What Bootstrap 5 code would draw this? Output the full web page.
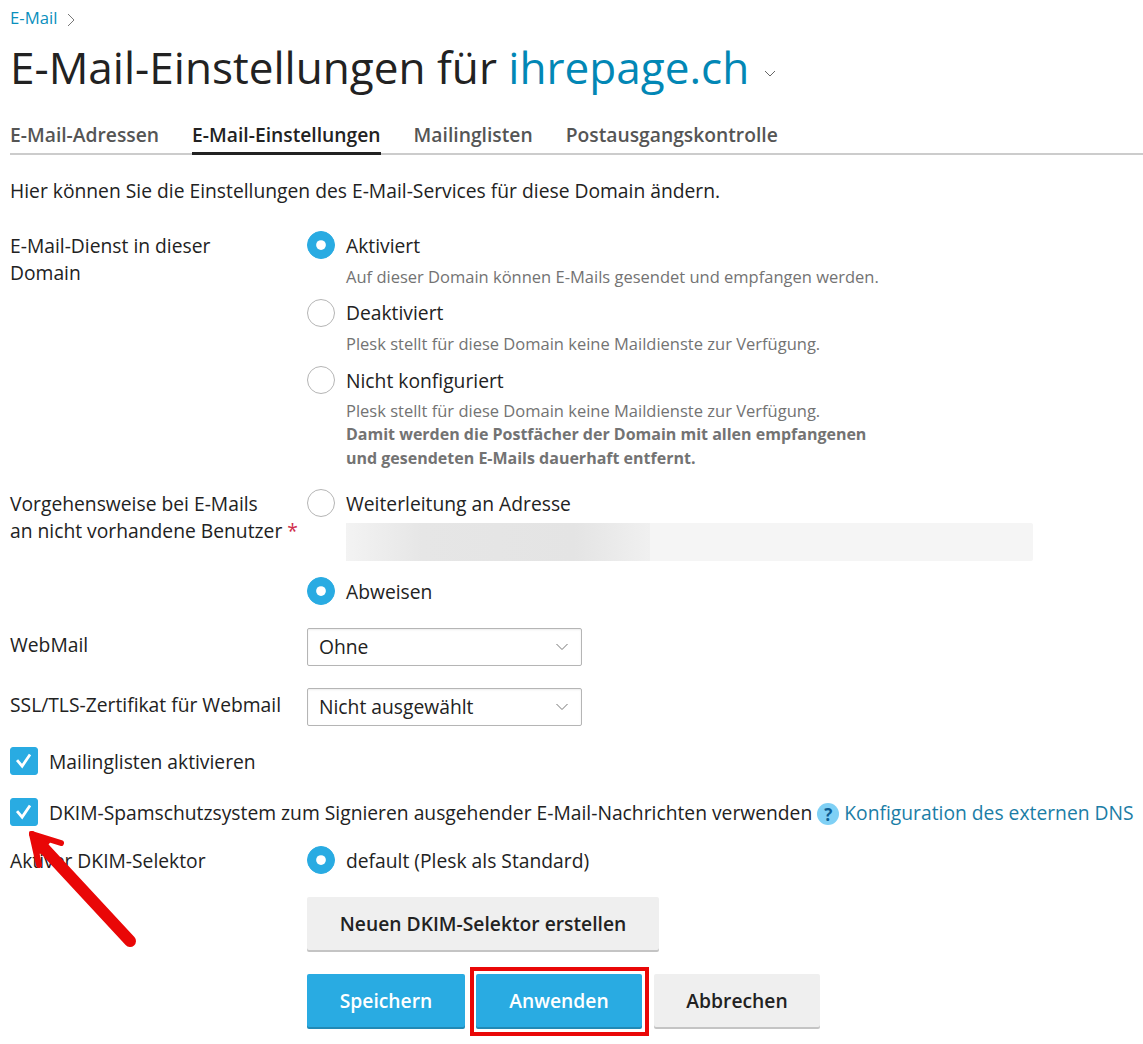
<!DOCTYPE html>
<html lang="de">
<head>
    <meta charset="UTF-8">
    <meta name="viewport" content="width=device-width, initial-scale=1.0">
    <title>E-Mail-Einstellungen</title>
    <link rel="stylesheet" href="https://cdn.jsdelivr.net/npm/bootstrap@5.3.0/dist/css/bootstrap.min.css">
    <style>
        html, body {
            height: 1044px;
            overflow: hidden;
        }
        body {
            background: #fff;
            color: #222;
            font-family: "Open Sans", "Liberation Sans", sans-serif;
            font-size: 19.28px;
            line-height: 27px;
        }
        a { text-decoration: none; color: #1b7da6; }
        .page-wrap {
            position: relative;
            padding: 4px 0 0 10px;
        }
        .crumb {
            font-size: 16.7px;
            line-height: 27px;
        }
        .crumb a { color: #0a8fbd; }
        .crumb svg { margin-left: 5px; }
        .page-title {
            font-size: 44.1px;
            line-height: 62px;
            font-weight: 400;
            margin: 5px 0 0;
            color: #222;
        }
        .page-title a { color: #0287b5; }
        .page-title svg { margin-left: 3px; vertical-align: 6px; }
        .tab-row {
            gap: 33px;
            margin-top: 21px;
            border-bottom: 2px solid #ccc;
        }
        .tab-row a {
            display: block;
            color: #555;
            font-weight: 600;
            line-height: 27px;
            padding: 2px 0 4px;
            margin-bottom: -2px;
            border-bottom: 3px solid transparent;
        }
        .tab-row a.current {
            color: #222;
            border-bottom-color: #222;
        }
        .intro { margin: 22px 0 0; }
        .field-row { display: flex; }
        .field-label { width: 297px; flex: none; padding-top: 1px; }
        .field-label.beside-select { padding-top: 3px; }
        .field-body { flex: 1; min-width: 0; }
        .row-service { margin-top: 27px; }
        .row-unknown { margin-top: 19px; }
        .row-webmail { margin-top: 23px; }
        .row-cert { margin-top: 22px; }
        .row-dkim { margin-top: 20px; }
        .opt-line {
            display: flex;
            align-items: center;
            gap: 11px;
            height: 28px;
        }
        .opt-line .form-check-input {
            margin: 0;
            width: 28px;
            height: 28px;
            flex: none;
            border: 1px solid #b5b5b5;
            float: none;
        }
        .form-check-input:checked {
            background-color: #29abe2;
            border-color: #29abe2;
        }
        .form-check-input:checked[type=radio] {
            background-image: url("data:image/svg+xml,%3csvg xmlns='http://www.w3.org/2000/svg' viewBox='-4 -4 8 8'%3e%3ccircle r='1.5' fill='%23fff'/%3e%3c/svg%3e");
        }
        .form-check-input:checked[type=checkbox] {
            border-radius: 3px;
            background-image: url("data:image/svg+xml,%3csvg xmlns='http://www.w3.org/2000/svg' viewBox='0 0 28 28'%3e%3cpath fill='none' stroke='%23fff' stroke-width='3' d='M6.5 13l5.5 6.5 8.5-12.5'/%3e%3c/svg%3e");
        }
        .opt-hint {
            font-size: 16.5px;
            line-height: 23px;
            color: #737373;
            padding-left: 39px;
            margin-top: 5.5px;
        }
        .opt-hint.hint-last { margin-top: 5px; }
        .opt-hint b { font-weight: 700; font-size: 16px; }
        .opt-next { margin-top: 11px; }
        .opt-reject { margin-top: 16px; }
        .check-first { margin-top: 21px; }
        .check-second { margin-top: 23px; }
        .req { color: #d02d4b; }
        .addr-box {
            margin: 6px 0 0 39px;
            width: 687px;
            height: 38px;
            background: #f5f5f5;
            border-radius: 2px;
        }
        .addr-blur {
            width: 304px;
            height: 100%;
            background: linear-gradient(90deg, #f3f3f3 0, #e6e6e6 25%, #e4e4e4 75%, #f0f0f0 100%);
        }
        .form-select.plain-select {
            width: 275px;
            height: 38px;
            font-size: 19.28px;
            line-height: 27px;
            padding: 3px 34px 5px 11px;
            color: #222;
            border: 1px solid #b5b5b5;
            border-radius: 2px;
            box-shadow: inset 0 1px 2px rgba(0,0,0,.08);
            background-size: 12px 8px;
            background-position: right 13px center;
            background-image: url("data:image/svg+xml,%3csvg xmlns='http://www.w3.org/2000/svg' viewBox='0 0 12 8'%3e%3cpath fill='none' stroke='%23777' d='M.5 1l5.5 5.5L11.5 1'/%3e%3c/svg%3e");
        }
        .help-dot {
            display: inline-flex;
            align-items: center;
            justify-content: center;
            width: 22px;
            height: 22px;
            border-radius: 50%;
            background: #7fd0f5;
            color: #0c5d93;
            font-size: 17px;
            font-weight: 700;
            line-height: 1;
            vertical-align: -1px;
        }
        .btn-plesk {
            position: relative;
            font-size: 19.28px;
            font-weight: 600;
            line-height: 27px;
            height: 53px;
            padding: 0;
            border: 0;
            border-radius: 2px;
            background: #efefef;
            color: #222;
            box-shadow: 0 2px 0 #c4c4c4;
        }
        .btn-plesk.blue {
            background: #29abe2;
            color: #fff;
            box-shadow: 0 2px 0 #2189b5;
        }
        .btn-selector { width: 352px; margin-top: 23px; }
        .form-actions { gap: 11px; margin-top: 24px; }
        .btn-save { width: 158px; }
        .btn-apply { width: 166px; }
        .btn-apply::after {
            content: "";
            position: absolute;
            top: -7px;
            left: -6px;
            right: -7px;
            bottom: -9px;
            border: 4px solid #e90707;
        }
        .btn-cancel { width: 166px; margin-left: 1px; }
        .arrow-mark {
            position: absolute;
            left: 0;
            top: 0;
            pointer-events: none;
        }
    </style>
</head>
<body>
    <div class="page-wrap">
        <div class="crumb">
            <a href="#">E-Mail</a>
            <svg width="9" height="14" viewBox="0 0 9 14"><path fill="none" stroke="#777" d="M1 1l6 6-6 6"/></svg>
        </div>
        <h1 class="page-title">E-Mail-Einstellungen für <a href="#">ihrepage.ch</a>
            <svg width="12" height="8" viewBox="0 0 12 8"><path fill="none" stroke="#666" d="M1 1l5 5 5-5"/></svg>
        </h1>

        <div class="d-flex tab-row">
            <a href="#">E-Mail-Adressen</a>
            <a href="#" class="current">E-Mail-Einstellungen</a>
            <a href="#">Mailinglisten</a>
            <a href="#">Postausgangskontrolle</a>
        </div>

        <p class="intro">Hier können Sie die Einstellungen des E-Mail-Services für diese Domain ändern.</p>

        <div class="field-row row-service">
            <div class="field-label">E-Mail-Dienst in dieser<br>Domain</div>
            <div class="field-body">
                <label class="opt-line"><input class="form-check-input" type="radio" name="svc" checked> Aktiviert</label>
                <div class="opt-hint">Auf dieser Domain können E-Mails gesendet und empfangen werden.</div>
                <label class="opt-line opt-next"><input class="form-check-input" type="radio" name="svc"> Deaktiviert</label>
                <div class="opt-hint">Plesk stellt für diese Domain keine Maildienste zur Verfügung.</div>
                <label class="opt-line opt-next"><input class="form-check-input" type="radio" name="svc"> Nicht konfiguriert</label>
                <div class="opt-hint hint-last">Plesk stellt für diese Domain keine Maildienste zur Verfügung.<br><b>Damit werden die Postfächer der Domain mit allen empfangenen<br>und gesendeten E-Mails dauerhaft entfernt.</b></div>
            </div>
        </div>

        <div class="field-row row-unknown">
            <div class="field-label">Vorgehensweise bei E-Mails<br>an nicht vorhandene Benutzer <span class="req">*</span></div>
            <div class="field-body">
                <label class="opt-line"><input class="form-check-input" type="radio" name="rej"> Weiterleitung an Adresse</label>
                <div class="addr-box"><div class="addr-blur"></div></div>
                <label class="opt-line opt-reject"><input class="form-check-input" type="radio" name="rej" checked> Abweisen</label>
            </div>
        </div>

        <div class="field-row row-webmail">
            <div class="field-label beside-select">WebMail</div>
            <div class="field-body">
                <select class="form-select plain-select"><option>Ohne</option></select>
            </div>
        </div>

        <div class="field-row row-cert">
            <div class="field-label beside-select">SSL/TLS-Zertifikat für Webmail</div>
            <div class="field-body">
                <select class="form-select plain-select"><option>Nicht ausgewählt</option></select>
            </div>
        </div>

        <label class="opt-line check-first"><input class="form-check-input" type="checkbox" checked> Mailinglisten aktivieren</label>
        <label class="opt-line text-nowrap check-second"><input class="form-check-input" type="checkbox" checked> <span>DKIM-Spamschutzsystem zum Signieren ausgehender E-Mail-Nachrichten verwenden <span class="help-dot">?</span> <a href="#">Konfiguration des externen DNS</a></span></label>

        <div class="field-row row-dkim">
            <div class="field-label">Aktiver DKIM-Selektor</div>
            <div class="field-body">
                <label class="opt-line"><input class="form-check-input" type="radio" name="dkim" checked> default (Plesk als Standard)</label>
                <button type="button" class="btn btn-plesk btn-selector">Neuen DKIM-Selektor erstellen</button>
                <div class="d-flex form-actions">
                    <button type="button" class="btn btn-plesk blue btn-save">Speichern</button>
                    <button type="button" class="btn btn-plesk blue btn-apply">Anwenden</button>
                    <button type="button" class="btn btn-plesk btn-cancel">Abbrechen</button>
                </div>
            </div>
        </div>

        <svg class="arrow-mark" width="160" height="1044" viewBox="0 0 160 1044">
            <g fill="none" stroke="#e90707" stroke-linecap="round">
                <path fill="#e90707" stroke-width="2" d="M31 833l20 7-11 13z"/>
                <path stroke-width="6" d="M32 834l29 9"/>
                <path stroke-width="6" d="M32 834l7 31"/>
                <path stroke-width="12" d="M40 844l90 97"/>
            </g>
        </svg>
    </div>
</body>
</html>
